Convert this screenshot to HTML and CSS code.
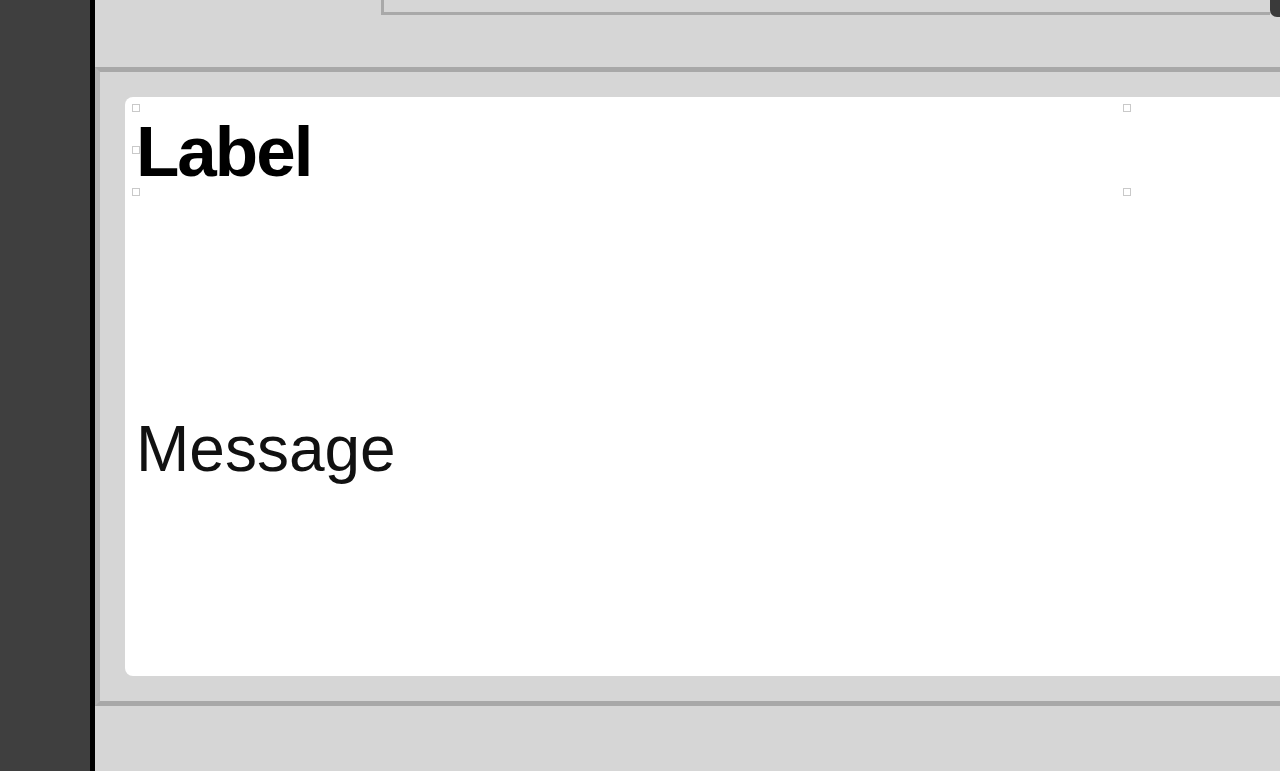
FILE: index.html
```html
<!DOCTYPE html>
<html lang="en">

<head>
    <meta charset="UTF-8">
    <meta name="viewport" content="width=device-width, initial-scale=1.0">
    <title>Label</title>
    <link rel="stylesheet" href="styles.css">
</head>

<body>
    <div class="window">

        <!--Thanh ben trai-->
        <div class="sidebar"></div>

        <div class="main">

            <!--Khung phia tren-->
            <div class="top-bar">
                <div class="top-box"></div>
                <div class="top-corner"></div>
            </div>

            <!--Khung noi dung-->
            <div class="panel">
                <div class="card">
                    <div class="label-box">
                        <h1 class="label">Label</h1>
                        <span class="handle tl"></span>
                        <span class="handle ml"></span>
                        <span class="handle bl"></span>
                        <span class="handle tr"></span>
                        <span class="handle br"></span>
                    </div>
                    <p class="message">Message</p>
                </div>
            </div>
        </div>
    </div>
</body>

</html>
```

FILE: styles.css
```css
html,
body {
    margin: 0;
    height: 100%;
    overflow: hidden;
}

body {
    font-family: "Liberation Sans", Arial, sans-serif;
    background-color: #d6d6d6;
}

.window {
    display: flex;
    height: 771px;
}

.sidebar {
    width: 90px;
    flex-shrink: 0;
    background-color: #3f3f3f;
    border-right: 5px solid #000;
}

.main {
    flex: 1;
    overflow: hidden;
    background-color: #d6d6d6;
}

.top-bar {
    display: flex;
    height: 15px;
    margin-left: 286px;
}

.top-box {
    flex: 1;
    border-left: 3px solid #a9a9a9;
    border-bottom: 3px solid #a9a9a9;
}

.top-corner {
    width: 10px;
    height: 17px;
    background-color: #3a3a3a;
    border-bottom-left-radius: 7px;
}

.panel {
    margin-top: 52px;
    width: calc(100% + 60px);
    height: 639px;
    box-sizing: border-box;
    border-top: 5px solid #a8a8a8;
    border-bottom: 5px solid #a8a8a8;
    border-left: 5px solid #b4b4b4;
    padding: 25px;
}

.card {
    background-color: #fff;
    border-radius: 8px;
    height: 579px;
    padding: 11px 0 0 11px;
    box-sizing: border-box;
}

.label-box {
    position: relative;
    width: 991px;
    height: 84px;
}

.label {
    margin: 0;
    padding-top: 2px;
    font-size: 71px;
    font-weight: bold;
    line-height: 84px;
    letter-spacing: -2px;
    color: #000;
}

.handle {
    position: absolute;
    width: 6px;
    height: 6px;
    border: 1px solid #c9c9c9;
    background-color: #fff;
}

.tl {
    left: -4px;
    top: -4px;
}

.ml {
    left: -4px;
    top: 38px;
}

.bl {
    left: -4px;
    bottom: -4px;
}

.tr {
    right: -4px;
    top: -4px;
}

.br {
    right: -4px;
    bottom: -4px;
}

.message {
    margin: 0;
    margin-top: 220px;
    font-size: 64px;
    line-height: 74px;
    color: #111;
}
```
